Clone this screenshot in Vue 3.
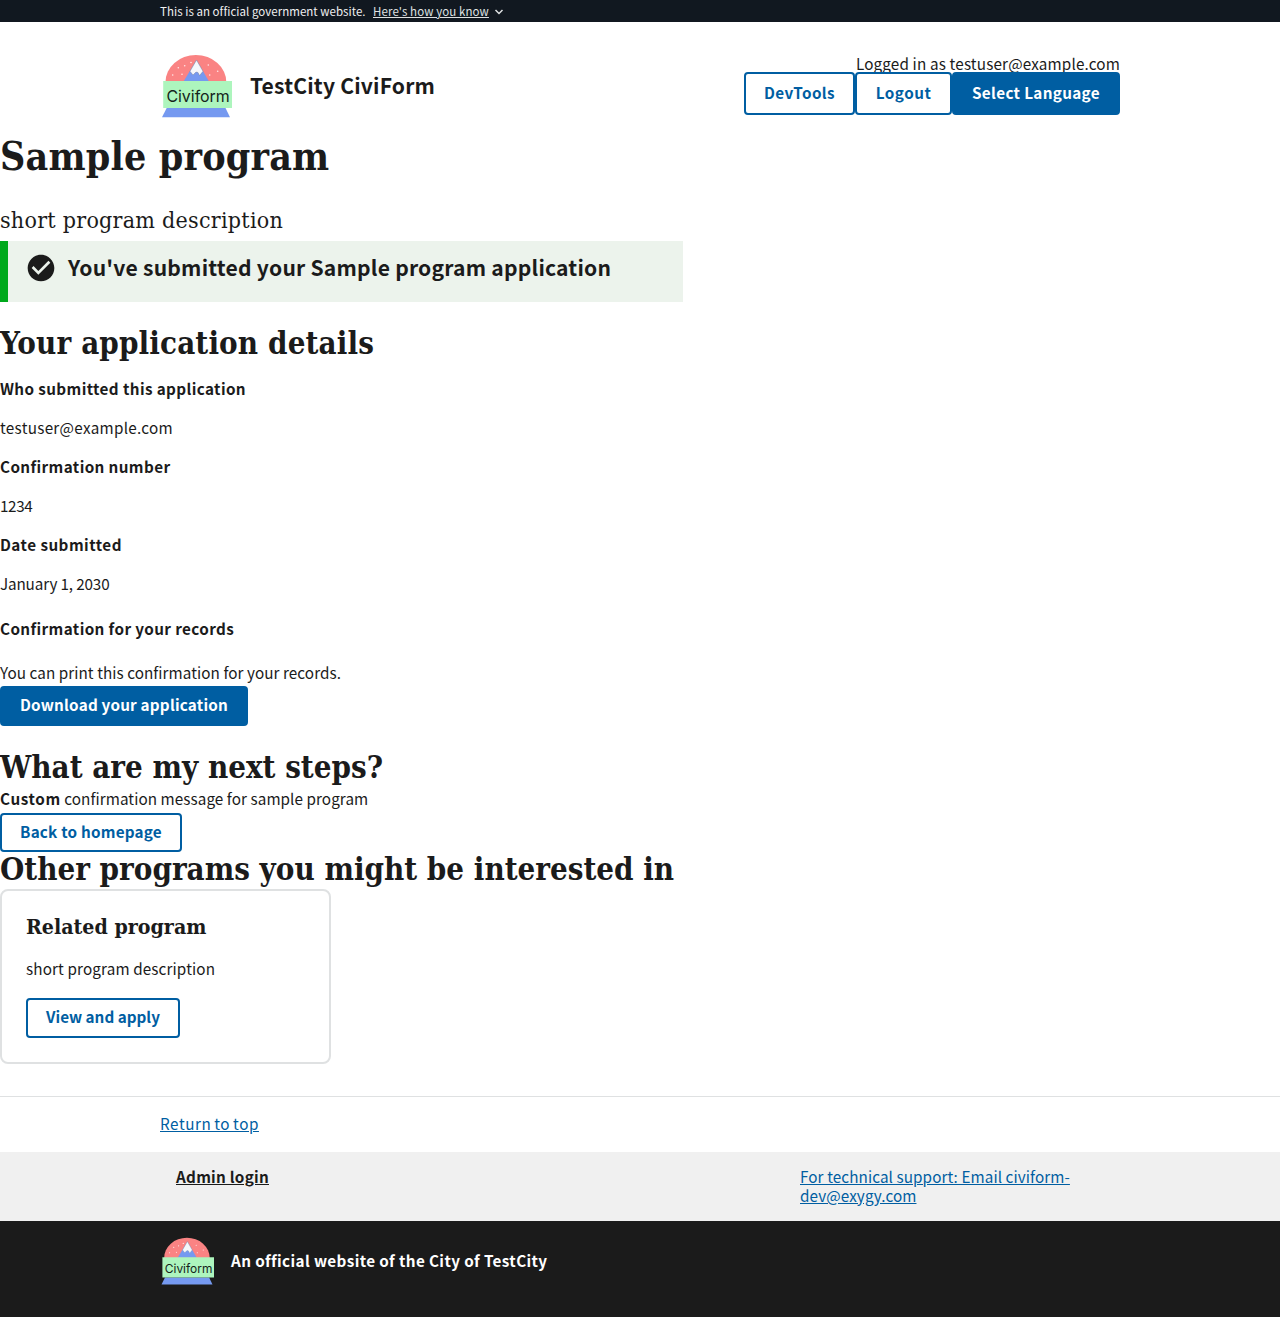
<script setup>
import { h } from 'vue'

const flakes = [[24.7, 15.7], [18.3, 17.7], [22, 24.3], [12.7, 25], [31, 12.5], [48.3, 15], [57.7, 21.3], [49.7, 25]]

const CivicLogo = () => h('svg', { viewBox: '0 0 72 72', 'aria-hidden': 'true' }, [
  h('path', { d: 'M5.500 32A30.400 27 0 0 1 66.300 32Z', fill: '#fa8383' }),
  h('path', { d: 'M23.500 31.500 36.500 10 49 31.500Z', fill: '#7599f0' }),
  h('path', { d: 'M30 21.300 36.500 10 43 21.300 39.500 25.500 38 22.500 36 22 33 25Z', fill: '#f5f7fb', stroke: '#69758d', 'stroke-width': 0.4 }),
  ...flakes.map(([cx, cy]) => h('circle', { cx, cy, r: 0.8, fill: '#ffe9e9' })),
  h('path', { d: 'M6.700 58H65.500L70 67.300H2Z', fill: '#7599f0' }),
  h('path', { d: 'M3.200 31H72V58H3.200Z', fill: '#adf5bd' }),
  h('text', { x: 6.4, y: 52, textLength: 63.4, lengthAdjust: 'spacingAndGlyphs', 'font-family': 'Inter, sans-serif', 'font-size': 16.4, fill: '#14241a' }, 'Civiform'),
])
</script>

<template>
  <div class="page">
    <section class="banner">
      <span class="banner-text">This is an official government website.</span>
      <a class="banner-link"><span>Here's how you know</span></a>
      <svg class="chevron" viewBox="0 0 10 6"><path d="M1.500 1 5 4.500 8.500 1" /></svg>
    </section>
    <header class="header">
      <div class="brand">
        <CivicLogo class="logo" />
        <div class="title">TestCity CiviForm</div>
      </div>
      <div class="account">
        <span class="logged">Logged in as testuser@example.com</span>
        <nav class="actions">
          <button class="btn outline dev">DevTools</button>
          <button class="btn outline logout">Logout</button>
          <button class="btn solid language">Select Language</button>
        </nav>
      </div>
    </header>
    <main>
      <h1>Sample program</h1>
      <p class="lead">short program description</p>
      <div class="alert">
        <svg class="check" viewBox="0 0 24 24"><path d="M12 2C6.480 2 2 6.480 2 12s4.480 10 10 10 10-4.480 10-10S17.520 2 12 2zm-2 15-5-5 1.410-1.410L10 14.170l7.590-7.590L19 8l-9 9z" /></svg>
        <span class="alert-title">You've submitted your Sample program application</span>
      </div>
      <h2 class="details-title">Your application details</h2>
      <dl>
        <dt>Who submitted this application</dt>
        <dd class="email">testuser@example.com</dd>
        <dt>Confirmation number</dt>
        <dd class="number">1234</dd>
        <dt class="date">Date submitted</dt>
        <dd class="submitted-on">January 1, 2030</dd>
      </dl>
      <h3>Confirmation for your records</h3>
      <p class="print">You can print this confirmation for your records.</p>
      <button class="btn solid download">Download your application</button>
      <h2 class="steps-title">What are my next steps?</h2>
      <p class="message"><strong>Custom</strong> confirmation message for sample program</p>
      <button class="btn outline home">Back to homepage</button>
      <h2 class="other-title">Other programs you might be interested in</h2>
      <article class="card">
        <h4>Related program</h4>
        <p>short program description</p>
        <button class="btn outline view">View and apply</button>
      </article>
    </main>
    <footer>
      <div class="return"><a>Return to top</a></div>
      <div class="links">
        <div class="admin"><a>Admin login</a></div>
        <a class="support">For technical support: Email civiform-<br>dev@exygy.com</a>
      </div>
      <div class="identity">
        <CivicLogo class="logo-small" />
        <strong class="official">An official website of the City of TestCity</strong>
      </div>
    </footer>
  </div>
</template>

<style>
body { background: #fff; }
</style>

<style scoped>
* { box-sizing: border-box; }
.page { width: 1280px; color: #1b1b1b; font: 15.270px/20px "Noto Sans CJK JP", "Noto Sans", sans-serif; white-space: nowrap; }
h1, h2, h3, h4, p, dl, dt, dd { margin: 0; }

.banner { height: 22px; padding: 1px 0 0 160px; display: flex; align-items: center; background: #111820; color: #f0f0f0; font-size: 11.500px; line-height: 21px; }
.banner-text { width: 213px; letter-spacing: .04px; }
.banner-link { width: 116px; color: #dfe1e2; text-decoration: underline; letter-spacing: .1px; }
.chevron { width: 10px; height: 6px; margin-left: 5px; fill: none; stroke: #dfe1e2; stroke-width: 1.500; }

.header { height: 111px; padding: 0 160px; display: flex; justify-content: space-between; }
.brand { display: flex; }
.logo { width: 72px; height: 72px; margin-top: 28px; }
.title { margin: 48px 0 0 18px; font-size: 21.100px; line-height: 30px; font-weight: 700; letter-spacing: .18px; }
.account { display: flex; flex-direction: column; align-items: flex-end; padding-top: 31px; }
.logged { height: 19px; letter-spacing: .15px; }
.actions { display: flex; }

.btn { display: flex; align-items: center; justify-content: center; height: 40px; margin: 0; padding: 0 0 4px; font: 700 15.270px/20px "Noto Sans CJK JP", "Noto Sans", sans-serif; border: 2px solid #005ea2; border-radius: 4px; background: #fff; color: #005ea2; }
.btn.solid { background: #005ea2; color: #fff; }
.actions .btn { height: 43px; }
.dev { width: 111px; letter-spacing: .39px; }
.logout { width: 97px; letter-spacing: .5px; }
.language { width: 168px; letter-spacing: .33px; }

h1, h2, h4, .lead { font-family: "DejaVu Serif Condensed", "DejaVu Serif", serif; font-stretch: condensed; }
h1 { height: 72px; font-size: 39px; line-height: 46px; letter-spacing: .18px; }
.lead { height: 36px; font-size: 23px; line-height: 31px; letter-spacing: .26px; }
.alert { width: 683px; height: 61px; padding: 11px 0 0 17px; border-left: 8px solid #00a91c; background: #ecf3ec; display: flex; }
.check { width: 32px; height: 32px; fill: #1b1b1b; }
.alert-title { margin-left: 11px; font-size: 21.100px; line-height: 30px; font-weight: 700; letter-spacing: .21px; }
h2 { font-size: 31px; line-height: 36px; height: 38px; }
.details-title { margin-top: 23px; letter-spacing: .13px; }

dl { padding-top: 15px; }
dt, dd { height: 39px; }
dt, h3 { font-weight: 700; letter-spacing: .38px; }
.email { letter-spacing: .28px; }
.number { letter-spacing: -.35px; }
.date { letter-spacing: .46px; }
.submitted-on { letter-spacing: -.15px; }
h3 { margin-top: 6px; font-size: 15.270px; height: 44px; }
.print { height: 24px; letter-spacing: .055px; }
.download { width: 248px; letter-spacing: .2px; }
.steps-title { margin-top: 23px; }
.message { height: 25px; margin-top: 1px; letter-spacing: .065px; }
.message strong { letter-spacing: .6px; }
.home { width: 182px; height: 39px; padding-bottom: 3px; letter-spacing: .21px; }
.other-title { margin-top: -1px; }
.card { width: 331px; height: 175px; border: 2px solid #dfe1e2; border-radius: 8px; padding: 22px 24px; }
h4 { font-size: 21.200px; line-height: 28px; height: 45px; }
.card p { height: 40px; letter-spacing: .12px; }
.view { width: 154px; }

footer { margin-top: 32px; border-top: 1px solid #dfe1e2; }
.return { height: 55px; padding: 16px 160px; letter-spacing: .54px; word-spacing: -1px; }
.return a, .support { color: #005ea2; text-decoration: underline; }
.links { height: 69px; background: #f0f0f0; padding: 15px 176px; display: flex; line-height: 19px; }
.admin { width: 624px; font-weight: 700; letter-spacing: .26px; }
.admin a { text-decoration: underline; }
.support { letter-spacing: .085px; }
.identity { height: 96px; background: #1b1b1b; padding: 13px 160px; display: flex; color: #fff; }
.logo-small { width: 54px; height: 54px; }
.official { margin: 16px 0 0 17px; letter-spacing: .37px; }
</style>
